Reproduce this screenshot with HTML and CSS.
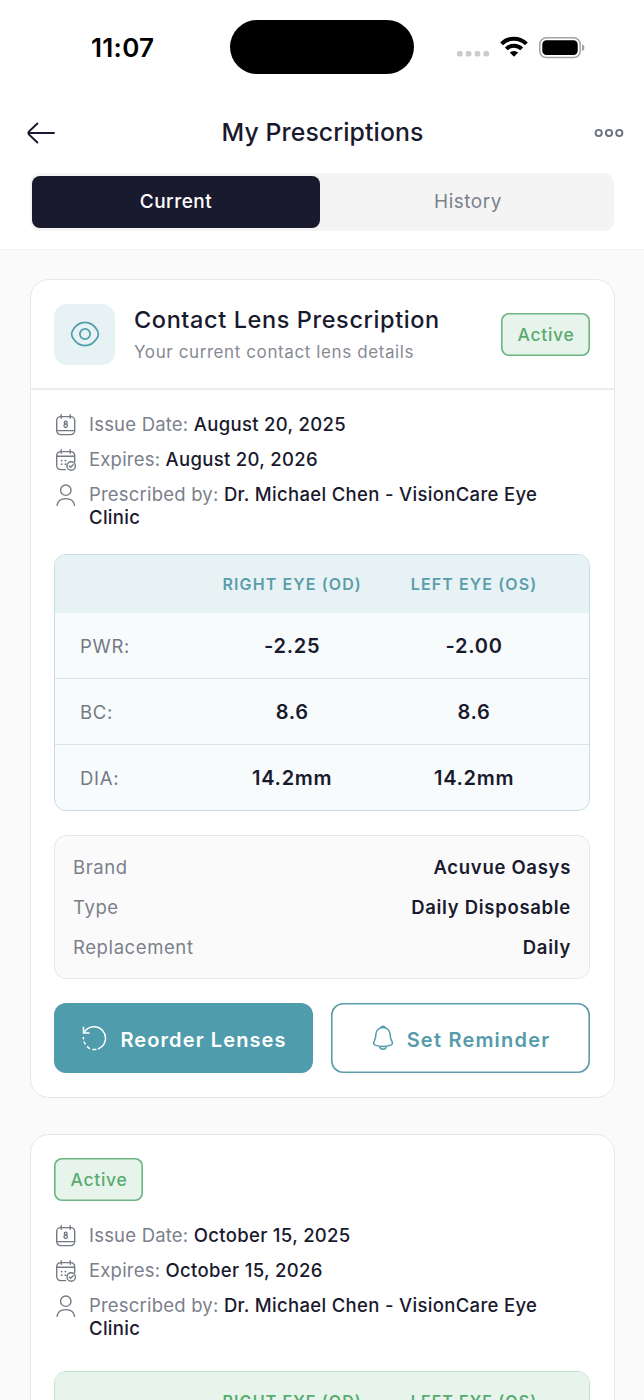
FILE: index.html
```html
<!DOCTYPE html>
<html lang="en">
<head>
  <meta charset="UTF-8" />
  <meta name="viewport" content="width=device-width, initial-scale=1.0" />
  <title>My Prescriptions</title>
  <link rel="stylesheet" href="styles.css">
</head>
<body>
  <!-- shared icons -->
  <svg class="sprite" width="0" height="0">
    <symbol id="icon-issued" viewBox="0 0 22 22">
      <rect x="1.7" y="2.6" width="18" height="18" rx="4"/>
      <path d="M6.2 .8v3.4M15.2 .8v3.4M1.8 16.6h17.8"/>
      <circle cx="10.7" cy="8.7" r="1.4"/>
      <circle cx="10.7" cy="11.8" r="1.7"/>
    </symbol>
    <symbol id="icon-expires" viewBox="0 0 22 22">
      <path d="M10.5 20.6H5.7a4 4 0 0 1-4-4v-10a4 4 0 0 1 4-4h10a4 4 0 0 1 4 4v6.2M6.2 .8v3.4M15.2 .8v3.4M1.8 7.3h17.8"/>
      <path class="dots" d="M6.6 11.6h.1M10.4 11.6h.1M6.6 15.2h.1M10.4 15.2h.1"/>
      <circle cx="16.2" cy="17" r="4.2"/>
      <path d="M14.3 17.1l1.3 1.2 2.5-2.5"/>
    </symbol>
    <symbol id="icon-user" viewBox="0 0 22 22">
      <circle cx="10.8" cy="6.2" r="5.2"/>
      <path d="M2 21.3c.7-4.2 4.3-6.7 8.8-6.7s8.1 2.5 8.8 6.7"/>
    </symbol>
  </svg>

  <header class="header">
    <div class="status-bar">
      <div class="time">11:07</div>
      <div class="island"></div>
      <div class="status-icons">
        <svg width="34" height="8" viewBox="0 0 34 8" fill="#cbcbcb">
          <rect x="1" y="1" width="5.6" height="5.6" rx="1.8"/>
          <rect x="9.8" y="1" width="5.6" height="5.6" rx="1.8"/>
          <rect x="18.7" y="1" width="5.6" height="5.6" rx="1.8"/>
          <rect x="27.5" y="1" width="5.6" height="5.6" rx="1.8"/>
        </svg>
        <svg class="wifi" width="28" height="21" viewBox="0 0 28 21" fill="none" stroke="#000" stroke-width="4">
          <path d="M1.6 7.8a17.6 17.6 0 0 1 24.8 0"/>
          <path d="M6.3 12.9a11 11 0 0 1 15.4 0"/>
          <path d="M14 20.8l-4.2-4.2a6 6 0 0 1 8.4 0z" fill="#000" stroke="none"/>
        </svg>
        <svg class="battery" width="46" height="22" viewBox="0 0 46 22">
          <rect x=".8" y=".8" width="40.4" height="19.8" rx="6.5" fill="none" stroke="#a3a3a3" stroke-width="1.5"/>
          <rect x="3.3" y="3.3" width="35.4" height="14.8" rx="4.2"/>
          <path d="M43 7.3c3.2.8 3.2 6 0 6.8z" fill="#a3a3a3"/>
        </svg>
      </div>
    </div>
    <div class="nav">
      <svg width="28" height="22" viewBox="0 0 28 22" fill="none" stroke="#1a1a2e" stroke-width="1.9" stroke-linecap="round" stroke-linejoin="round">
        <path d="M27 11H1.2M10.4 1.5L2.5 9Q.3 11 2.5 13l7.9 7.500"/>
      </svg>
      <h1>My Prescriptions</h1>
      <svg width="30" height="10" viewBox="0 0 30 10" fill="none" stroke="#6b7280" stroke-width="1.9">
        <circle cx="4.7" cy="5" r="3.1"/>
        <circle cx="15" cy="5" r="3.1"/>
        <circle cx="25.3" cy="5" r="3.1"/>
      </svg>
    </div>
    <div class="tabs">
      <button class="tab active">Current</button>
      <button class="tab">History</button>
    </div>
  </header>

  <main class="list">
    <section class="card">
      <div class="card-header">
        <div class="card-icon">
          <svg width="30" height="26" viewBox="0 0 30 26" fill="none" stroke="#4f9cac" stroke-width="1.7">
            <path d="M1.6 13c0-2.1.6-3 1.800-4.700C5.800 4.600 9.800 1.400 15 1.400s9.200 3.200 11.600 6.900c1.200 1.700 1.800 2.600 1.800 4.700s-.6 3-1.800 4.700C24.200 21.400 20.200 24.600 15 24.600S5.800 21.400 3.400 17.700C2.200 16 1.600 15.100 1.600 13z"/>
            <circle cx="15" cy="13" r="5.1"/>
          </svg>
        </div>
        <div class="card-title">
          <h2>Contact Lens Prescription</h2>
          <p>Your current contact lens details</p>
        </div>
        <span class="badge">Active</span>
      </div>
      <div class="card-body">
        <ul class="info">
          <li><svg class="icon"><use href="#icon-issued"/></svg><span>Issue Date: <b>August 20, 2025</b></span></li>
          <li><svg class="icon"><use href="#icon-expires"/></svg><span>Expires: <b>August 20, 2026</b></span></li>
          <li><svg class="icon"><use href="#icon-user"/></svg><span>Prescribed by: <b>Dr. Michael Chen - VisionCare Eye Clinic</b></span></li>
        </ul>

        <div class="rx">
          <div class="rx-row rx-head"><span></span><span>RIGHT EYE (OD)</span><span>LEFT EYE (OS)</span></div>
          <div class="rx-row"><span>PWR:</span><b>-2.25</b><b>-2.00</b></div>
          <div class="rx-row"><span>BC:</span><b>8.6</b><b>8.6</b></div>
          <div class="rx-row"><span>DIA:</span><b>14.2mm</b><b>14.2mm</b></div>
        </div>

        <div class="product">
          <div><span>Brand</span><b>Acuvue Oasys</b></div>
          <div><span>Type</span><b>Daily Disposable</b></div>
          <div><span>Replacement</span><b>Daily</b></div>
        </div>

        <div class="actions">
          <button class="btn primary">
            <svg width="26" height="26" viewBox="0 0 26 26" fill="none" stroke="#fff" stroke-width="1.5" stroke-linecap="round" stroke-linejoin="round">
              <path d="M2.500 2.300v5.600h5.600M3.100 7.700A11.400 11.400 0 1 1 17.500 23.700"/>
              <path d="M14.900 24.500h-3M8.400 23.400l-2-1.500M4.100 19l-.9-2M2.400 13.700v-1.200"/>
            </svg>
            <span>Reorder Lenses</span>
          </button>
          <button class="btn">
            <svg width="22" height="26" viewBox="0 0 22 26" fill="none" stroke="#4f9cac" stroke-width="1.5" stroke-linejoin="round">
              <path d="M11 2.5c-4 0-7 3-7.2 6.8-.1 2.6.1 3.7-1.3 6.2-1.1 1.9-1.5 3.9.6 4.6 4.9 1.7 10.900 1.700 15.800 0 2.100-.7 1.700-2.700.6-4.600-1.400-2.500-1.200-3.600-1.300-6.200C18 5.500 15 2.500 11 2.500z"/>
              <path d="M8.8 2.6c.5-1.9 3.9-1.9 4.400 0M7.700 21.600c.7 3.600 5.900 3.600 6.600 0"/>
            </svg>
            <span>Set Reminder</span>
          </button>
        </div>
      </div>
    </section>

    <section class="card green">
      <div class="card-body">
        <span class="badge">Active</span>
        <ul class="info">
          <li><svg class="icon"><use href="#icon-issued"/></svg><span>Issue Date: <b>October 15, 2025</b></span></li>
          <li><svg class="icon"><use href="#icon-expires"/></svg><span>Expires: <b>October 15, 2026</b></span></li>
          <li><svg class="icon"><use href="#icon-user"/></svg><span>Prescribed by: <b>Dr. Michael Chen - VisionCare Eye Clinic</b></span></li>
        </ul>
        <div class="rx">
          <div class="rx-row rx-head"><span></span><span>RIGHT EYE (OD)</span><span>LEFT EYE (OS)</span></div>
        </div>
      </div>
    </section>
  </main>
</body>
</html>
```
FILE: styles.css
```css
* {
  box-sizing: border-box;
}
body {
  margin: 0;
  height: 100vh;
  overflow: hidden;
  display: flex;
  flex-direction: column;
  font-family: Inter, sans-serif;
  color: #1a1a2e;
  background: #fafafa;
}
h1, h2, p, ul {
  margin: 0;
  padding: 0;
}
b {
  font-weight: 500;
}
button {
  font-family: inherit;
  cursor: pointer;
}
.sprite {
  position: absolute;
}

/* header */
.header {
  flex: none;
  height: 250px;
  background: #fff;
  border-bottom: 1px solid #f3f3f4;
}
.status-bar {
  display: flex;
  height: 95px;
  padding: 20px 59px 0 90px;
}
.time {
  width: 140px;
  padding: 12px 0 0 1px;
  font-size: 26px;
  line-height: 32px;
  font-weight: 600;
  letter-spacing: 0.3px;
  color: #000;
}
.island {
  width: 184px;
  height: 54px;
  border-radius: 27px;
  background: #000;
}
.status-icons {
  display: flex;
  align-items: flex-start;
  margin-left: auto;
}
.status-icons svg:first-child {
  margin-top: 30px;
}
.wifi {
  margin: 16px 11px 0 10px;
}
.battery {
  margin-top: 17px;
}
.nav {
  display: flex;
  align-items: center;
  justify-content: space-between;
  height: 75px;
  padding: 0 20px 0 27px;
}
h1 {
  margin: -2px 4px 0 0;
  font-size: 24.8px;
  font-weight: 550;
  letter-spacing: 0.1px;
}
.tabs {
  display: flex;
  gap: 4px;
  width: 584px;
  height: 58px;
  margin: 3px 0 0 30px;
  padding: 3px 2px;
  border-radius: 10px;
  background: #f4f4f5;
}
.tab {
  flex: 1;
  padding: 0 0 2px;
  border: none;
  border-radius: 8px;
  background: none;
  color: #7b818c;
  font-size: 19px;
  letter-spacing: 0.5px;
}
.tab.active {
  background: #1a1a2e;
  color: #fff;
  font-weight: 500;
}

/* cards */
.list {
  display: flex;
  flex-direction: column;
  gap: 36px;
  padding: 29px 29px 0 30px;
}
.card {
  flex: none;
  border: 1px solid #e6e7ea;
  border-radius: 19px;
  background: #fff;
}
.card-header {
  display: flex;
  align-items: center;
  height: 110px;
  padding: 0 24px 0 23px;
  border-bottom: 2px solid #ebecee;
}
.card-icon {
  display: flex;
  align-items: center;
  justify-content: center;
  width: 61px;
  height: 61px;
  margin-right: 19px;
  border-radius: 13px;
  background: #e7f2f5;
}
.card-title {
  flex: 1;
}
h2 {
  font-size: 23.5px;
  line-height: 30px;
  font-weight: 550;
  letter-spacing: 0.6px;
}
.card-title p {
  margin-top: 5px;
  font-size: 17px;
  line-height: 24px;
  letter-spacing: 0.6px;
  color: #868a94;
}
.badge {
  display: flex;
  align-items: center;
  justify-content: center;
  width: 89px;
  height: 43px;
  padding-left: 1px;
  border-radius: 8px;
  box-shadow: inset 0 0 0 1.6px #6cb481;
  background: #e7f4eb;
  color: #59ab70;
  font-size: 17.5px;
  font-weight: 500;
  letter-spacing: 0.7px;
}
.card-body {
  padding: 23px 24px 24px 23px;
}
.info {
  display: flex;
  flex-direction: column;
  gap: 12px;
  list-style: none;
  font-size: 18.5px;
  line-height: 23px;
  letter-spacing: 0.2px;
  color: #7b808b;
}
.info li {
  display: flex;
}
.info b {
  color: #1a1a2e;
  letter-spacing: 0.32px;
}
.icon {
  flex: none;
  width: 22px;
  height: 22px;
  margin: 1px 12px 0 1px;
  fill: none;
  stroke: #747a85;
  stroke-width: 1.4;
  stroke-linecap: round;
}
.dots {
  stroke-width: 1.8;
}

/* prescription table */
.rx {
  margin-top: 25px;
  border: 1px solid #c8dde3;
  border-radius: 12px;
  background: #f7fbfc;
  overflow: hidden;
}
.rx-row {
  display: grid;
  grid-template-columns: 1fr 1.5fr 1.5fr;
  align-items: center;
  height: 66px;
  padding: 0 24px 0 25px;
  border-top: 1px solid #d9e4e8;
  font-size: 18.5px;
  letter-spacing: 0.7px;
  color: #747984;
}
.rx-row b {
  font-size: 20px;
  font-weight: 600;
  text-align: center;
  color: #1a1a2e;
}
.rx-head {
  height: 58px;
  border-top: none;
  background: #e7f2f5;
  color: #5c9dab;
  font-size: 16px;
  font-weight: 600;
  letter-spacing: 1.1px;
  text-align: center;
}
.rx-head + .rx-row {
  height: 65px;
  border-top: none;
}
.green .rx {
  margin-top: 31px;
  border-color: #c3e0cc;
}
.green .rx-head {
  background: #e7f4eb;
  color: #59ab70;
}
.product {
  display: flex;
  flex-direction: column;
  justify-content: space-between;
  height: 144px;
  margin-top: 24px;
  padding: 18px;
  border: 1px solid #e6e7ea;
  border-radius: 12px;
  background: #fafafb;
  font-size: 18.5px;
  line-height: 26px;
  letter-spacing: 0.6px;
  color: #7b808b;
}
.product div {
  display: flex;
  justify-content: space-between;
}
.product b {
  font-weight: 600;
  letter-spacing: 0.7px;
  color: #1a1a2e;
}
.actions {
  display: flex;
  gap: 18px;
  margin-top: 24px;
}
.btn {
  display: flex;
  flex: 1;
  align-items: center;
  justify-content: center;
  gap: 13px;
  height: 70px;
  padding: 0 0 0 1px;
  border: none;
  border-radius: 12px;
  box-shadow: inset 0 0 0 1.6px #5c9dab;
  background: #fff;
  color: #559ba9;
  font-size: 20px;
  font-weight: 600;
  letter-spacing: 1.2px;
}
.btn span {
  padding-top: 3px;
}
.btn.primary {
  box-shadow: none;
  background: #4f9cac;
  color: #fff;
  letter-spacing: 1.1px;
}
.green .info {
  margin-top: 23px;
}
```
